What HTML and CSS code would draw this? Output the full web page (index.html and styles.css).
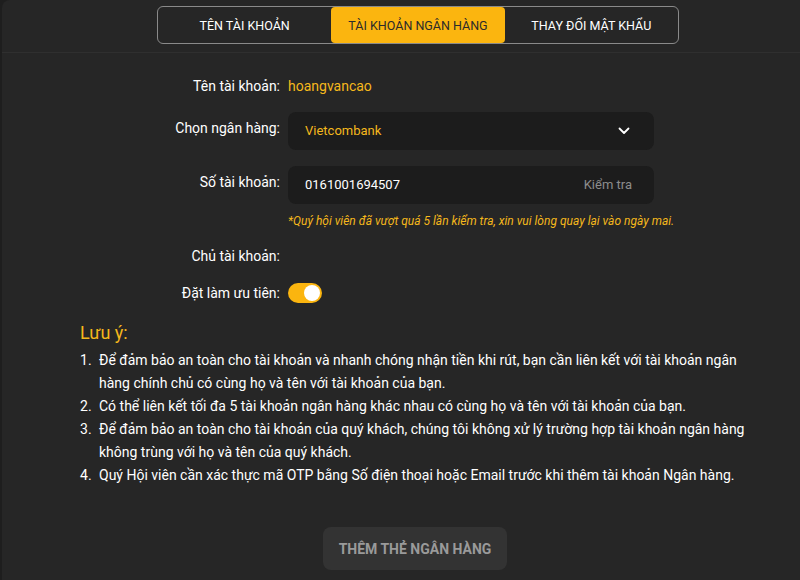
FILE: index.html
```html
<!DOCTYPE html>
<html lang="vi">
<head>
  <meta charset="UTF-8">
  <title>Tài khoản ngân hàng</title>
  <link rel="stylesheet" href="styles.css">
</head>
<body>
  <div class="panel">
    <div class="tabs-bar">
      <div class="tabs">
        <div class="tab">TÊN TÀI KHOẢN</div>
        <div class="tab active">TÀI KHOẢN NGÂN HÀNG</div>
        <div class="tab">THAY ĐỔI MẬT KHẨU</div>
      </div>
    </div>

    <div class="content">
      <div class="row">
        <div class="label">Tên tài khoản:</div>
        <div class="value">hoangvancao</div>
      </div>

      <div class="row field-row">
        <div class="label">Chọn ngân hàng:</div>
        <div class="box select">
          <span class="bank">Vietcombank</span>
          <svg class="chevron" width="12" height="8" viewBox="0 0 12 8">
            <path d="M1.5 1.5 L6 6 L10.5 1.5" fill="none" stroke="#fff" stroke-width="1.8" stroke-linecap="round" stroke-linejoin="round"/>
          </svg>
        </div>
      </div>

      <div class="row field-row">
        <div class="label">Số tài khoản:</div>
        <div class="field-col">
          <div class="box">
            <span class="number">0161001694507</span>
            <span class="check">Kiểm tra</span>
          </div>
          <div class="warn">*Quý hội viên đã vượt quá 5 lần kiểm tra, xin vui lòng quay lại vào ngày mai.</div>
        </div>
      </div>

      <div class="row owner">
        <div class="label">Chủ tài khoản:</div>
        <div class="value"></div>
      </div>

      <div class="row prio">
        <div class="label">Đặt làm ưu tiên:</div>
        <div class="toggle"><span class="knob"></span></div>
      </div>

      <h3 class="note-title">Lưu ý:</h3>
      <ol class="notes">
        <li>Để đảm bảo an toàn cho tài khoản và nhanh chóng nhận tiền khi rút, bạn cần liên kết với tài khoản ngân hàng chính chủ có cùng họ và tên với tài khoản của bạn.</li>
        <li>Có thể liên kết tối đa 5 tài khoản ngân hàng khác nhau có cùng họ và tên với tài khoản của bạn.</li>
        <li>Để đảm bảo an toàn cho tài khoản của quý khách, chúng tôi không xử lý trường hợp tài khoản ngân hàng không trùng với họ và tên của quý khách.</li>
        <li>Quý Hội viên cần xác thực mã OTP bằng Số điện thoại hoặc Email trước khi thêm tài khoản Ngân hàng.</li>
      </ol>

      <div class="actions">
        <button class="add-btn">THÊM THẺ NGÂN HÀNG</button>
      </div>
    </div>
  </div>
</body>
</html>
```

FILE: styles.css
```css
/* Reset */
* {
  margin: 0;
  padding: 0;
  box-sizing: border-box;
}

body {
  font-family: Roboto, "Liberation Sans", Arial, sans-serif;
  background-color: #1e1e1e;
  color: #fff;
  height: 580px;
  overflow: hidden;
}

.panel {
  margin-left: 2px;
  height: 100%;
  background-color: #262626;
  border-radius: 8px 0 0 0;
}

/* Tabs */
.tabs-bar {
  padding: 6px 0 8px;
  border-bottom: 1px solid #2f2f2f;
}

.tabs {
  display: flex;
  width: 522px;
  height: 38px;
  margin-left: 155px;
  border: 1px solid #8a8a8a;
  border-radius: 6px;
}

.tab {
  flex: 1;
  display: flex;
  align-items: center;
  justify-content: center;
  font-size: 12.5px;
  color: #fff;
}

.tab.active {
  background-color: #fbb50f;
  color: #2b2b2b;
  border-radius: 4px;
}

/* Form */
.content {
  padding: 23px 0 0 78px;
}

.row {
  display: flex;
  align-items: center;
  gap: 8px;
  font-size: 14px;
  line-height: 20px;
}

.label {
  width: 200px;
  text-align: right;
  color: #fff;
}

.value {
  color: #f5b81c;
}

.field-row {
  margin-top: 16px;
  align-items: flex-start;
}

.field-row .label {
  padding-top: 6px;
}

.box {
  width: 366px;
  height: 38px;
  display: flex;
  align-items: center;
  justify-content: space-between;
  padding: 0 22px 0 17px;
  background-color: #1c1c1c;
  border-radius: 8px;
  font-size: 13px;
}

.bank {
  color: #f5b81c;
}

.chevron {
  margin-right: 2px;
}

.number {
  color: #fff;
}

.check {
  color: #8c8c8c;
}

.warn {
  margin-top: 9px;
  font-size: 12px;
  line-height: 16px;
  font-style: italic;
  color: #f5b81c;
  white-space: nowrap;
}

.owner {
  margin-top: 17px;
}

.prio {
  margin-top: 17px;
}

.toggle {
  position: relative;
  width: 34px;
  height: 20px;
  border-radius: 10px;
  background-color: #fbb50f;
}

.toggle .knob {
  position: absolute;
  top: 2px;
  right: 2px;
  width: 16px;
  height: 16px;
  border-radius: 50%;
  background-color: #fff;
}

/* Notes */
.note-title {
  margin-top: 18px;
  font-size: 18px;
  line-height: 24px;
  font-weight: 400;
  color: #f5b81c;
}

.notes {
  list-style: none;
  counter-reset: note;
  margin-top: 4px;
  width: 670px;
  font-size: 14px;
  line-height: 23px;
  color: #fff;
}

.notes li {
  counter-increment: note;
  display: flex;
}

.notes li::before {
  content: counter(note) ".";
  flex: 0 0 19px;
}

.actions {
  margin-top: 40px;
  padding-left: 243px;
}

.add-btn {
  width: 184px;
  height: 43px;
  border: none;
  border-radius: 8px;
  background-color: #333333;
  color: #9a9a9a;
  font-family: Roboto, "Liberation Sans", Arial, sans-serif;
  font-size: 14px;
  font-weight: 700;
}
```
